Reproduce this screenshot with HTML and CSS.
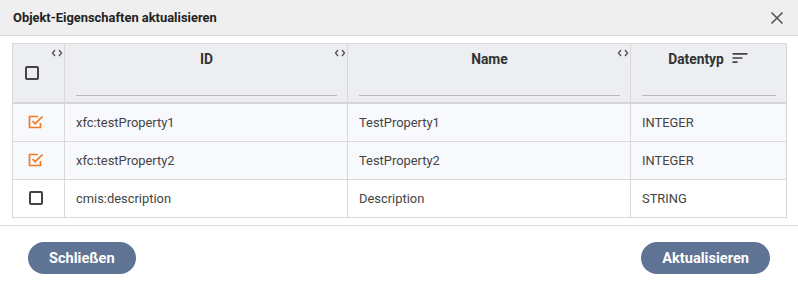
FILE: index.html
```html
<!DOCTYPE html>
<html lang="de">
<head>
  <meta charset="UTF-8" />
  <meta name="viewport" content="width=device-width, initial-scale=1.0"/>
  <title>Objekt-Eigenschaften aktualisieren</title>
  <link rel="stylesheet" href="styles.css">
</head>
<body>

  <div class="dialog">
    <div class="dialog-header">
      <div class="dialog-title">Objekt-Eigenschaften aktualisieren</div>
      <button class="close-button" aria-label="Schließen">
        <svg width="14" height="14" viewBox="0 0 14 14">
          <path d="M1.5 1.5 L12.5 12.5 M12.5 1.5 L1.5 12.5" stroke="#555" stroke-width="1.6" fill="none"/>
        </svg>
      </button>
    </div>

    <div class="dialog-body">
      <table class="grid">
        <colgroup>
          <col class="col-select">
          <col class="col-id">
          <col class="col-name">
          <col class="col-type">
        </colgroup>
        <thead>
          <tr>
            <th class="select-cell">
              <span class="checkbox"></span>
              <span class="resizer">
                <svg width="12" height="8" viewBox="0 0 12 8"><path d="M4 1 L1.5 4 L4 7 M8 1 L10.5 4 L8 7" stroke="#555" stroke-width="1.4" fill="none"/></svg>
              </span>
            </th>
            <th>
              <div class="head-inner">
                <div class="head-label">ID</div>
                <div class="head-filter"></div>
              </div>
              <span class="resizer">
                <svg width="12" height="8" viewBox="0 0 12 8"><path d="M4 1 L1.5 4 L4 7 M8 1 L10.5 4 L8 7" stroke="#555" stroke-width="1.4" fill="none"/></svg>
              </span>
            </th>
            <th>
              <div class="head-inner">
                <div class="head-label">Name</div>
                <div class="head-filter"></div>
              </div>
              <span class="resizer">
                <svg width="12" height="8" viewBox="0 0 12 8"><path d="M4 1 L1.5 4 L4 7 M8 1 L10.5 4 L8 7" stroke="#555" stroke-width="1.4" fill="none"/></svg>
              </span>
            </th>
            <th>
              <div class="head-inner">
                <div class="head-label">
                  Datentyp
                  <svg class="sort-icon" width="20" height="20" viewBox="0 0 24 24"><path d="M3 18h6v-2H3v2zM3 6v2h18V6H3zm0 7h12v-2H3v2z" fill="#444"/></svg>
                </div>
                <div class="head-filter"></div>
              </div>
            </th>
          </tr>
        </thead>
        <tbody>
          <tr class="selected">
            <td class="select-cell">
              <svg class="checked" width="16" height="14" viewBox="0 0 16 14"><path d="M10 1.5 H1.5 V12.5 H12.5 V8" stroke="#f47b20" stroke-width="1.7" fill="none"/><path d="M4.5 6 L7.2 8.7 L14.5 1.5" stroke="#f47b20" stroke-width="1.7" fill="none"/></svg>
            </td>
            <td>xfc:testProperty1</td>
            <td>TestProperty1</td>
            <td>INTEGER</td>
          </tr>
          <tr class="selected">
            <td class="select-cell">
              <svg class="checked" width="16" height="14" viewBox="0 0 16 14"><path d="M10 1.5 H1.5 V12.5 H12.5 V8" stroke="#f47b20" stroke-width="1.7" fill="none"/><path d="M4.5 6 L7.2 8.7 L14.5 1.5" stroke="#f47b20" stroke-width="1.7" fill="none"/></svg>
            </td>
            <td>xfc:testProperty2</td>
            <td>TestProperty2</td>
            <td>INTEGER</td>
          </tr>
          <tr>
            <td class="select-cell"><span class="checkbox"></span></td>
            <td>cmis:description</td>
            <td>Description</td>
            <td>STRING</td>
          </tr>
        </tbody>
      </table>
    </div>

    <div class="dialog-footer">
      <button class="pill-button">Schließen</button>
      <button class="pill-button">Aktualisieren</button>
    </div>
  </div>

</body>
</html>
```

FILE: styles.css
```css
* {
  box-sizing: border-box;
}
body {
  font-family: Roboto, 'Liberation Sans', sans-serif;
  background-color: #fff;
  color: #333;
  margin: 0;
}
.dialog {
  width: 798px;
}
.dialog-header {
  display: flex;
  justify-content: space-between;
  align-items: center;
  height: 36px;
  padding: 0 11px 0 13px;
  background-color: #efefef;
  border-bottom: 1px solid #d9d9d9;
}
.dialog-title {
  font-size: 12.9px;
  font-weight: 700;
  color: #222;
}
.close-button {
  border: none;
  background: none;
  padding: 0;
  width: 20px;
  height: 20px;
  display: flex;
  align-items: center;
  justify-content: center;
  cursor: pointer;
}

.dialog-body {
  padding: 7px 12px 7px 12px;
}
.grid {
  border-collapse: collapse;
  table-layout: fixed;
  width: 774px;
  font-size: 12.9px;
}
.col-select { width: 52px; }
.col-id { width: 283px; }
.col-name { width: 283px; }
.col-type { width: 156px; }

.grid th,
.grid td {
  border: 1px solid #d9d9d9;
}
.grid th {
  position: relative;
  height: 59px;
  padding: 0 10px 0 11px;
  background-color: #eceef1;
  border-bottom: 2px solid #d6d6d6;
  vertical-align: top;
}
.head-inner {
  display: flex;
  flex-direction: column;
  justify-content: space-between;
  height: 58px;
  padding: 6px 0 6px 0;
}
.head-label {
  display: flex;
  align-items: center;
  justify-content: center;
  gap: 6px;
  font-size: 13.8px;
  font-weight: 700;
  color: #333;
  height: 18px;
}
.sort-icon {
  display: block;
  margin-top: -2px;
}
.head-filter {
  border-bottom: 1px solid #b8b8b8;
  height: 1px;
}
.resizer {
  position: absolute;
  top: 5px;
  right: 1px;
  display: flex;
}
.grid th.select-cell {
  padding: 0 0 0 12px;
  vertical-align: middle;
}
.grid td {
  height: 38px;
  padding: 0 10px 0 11px;
  color: #444;
  vertical-align: middle;
}
.grid td.select-cell {
  padding: 0 0 0 15px;
}
.grid tr.selected td {
  background-color: #f8f9fd;
}
.checkbox {
  display: block;
  width: 14px;
  height: 14px;
  border: 2px solid #444;
  border-radius: 2px;
}
.grid td .checkbox {
  margin-left: 1px;
}
.checked {
  display: block;
}

.dialog-footer {
  display: flex;
  justify-content: space-between;
  align-items: center;
  border-top: 1px solid #dcdcdc;
  padding: 16px 28px 0 28px;
}
.pill-button {
  height: 32px;
  padding: 0 21px;
  border: none;
  border-radius: 16px;
  background-color: #5f7394;
  color: #fff;
  font-family: Roboto, 'Liberation Sans', sans-serif;
  font-size: 14.6px;
  font-weight: 700;
  cursor: pointer;
}
```
